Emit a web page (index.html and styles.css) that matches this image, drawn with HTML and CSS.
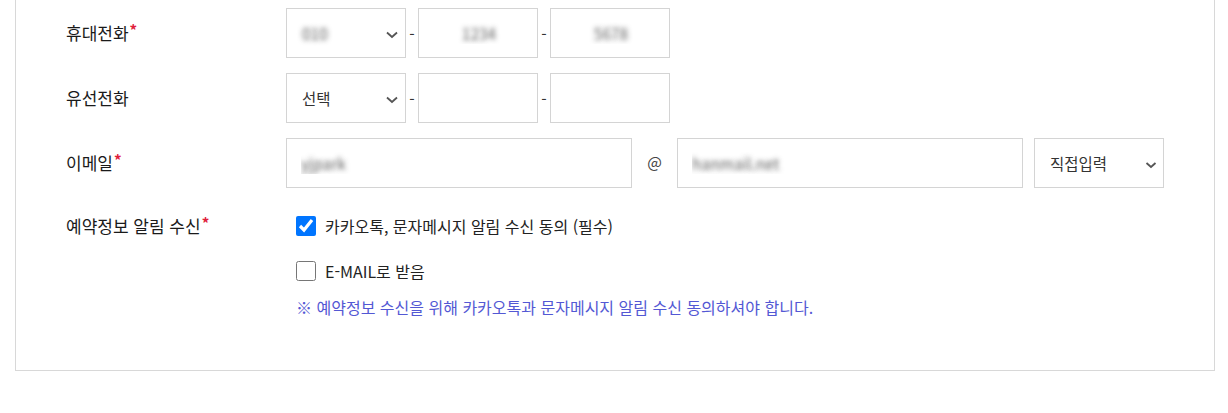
FILE: index.html
```html
<!DOCTYPE html>
<html lang="ko">
<head>
<meta charset="utf-8">
<title>예약정보</title>
<link rel="stylesheet" href="styles.css">
</head>
<body>
<div class="panel">
  <div class="row">
    <div class="label">휴대전화<span class="req">*</span></div>
    <div class="field">
      <div class="select sel-sm"><span class="blur">010</span><svg class="chev" width="12" height="8" viewBox="0 0 12 8"><path d="M1 1.5 L6 6 L11 1.5" fill="none" stroke="#555" stroke-width="1.8"/></svg></div>
      <span class="sep">-</span>
      <input class="box num blur" value="1234" readonly>
      <span class="sep">-</span>
      <input class="box num blur" value="5678" readonly>
    </div>
  </div>
  <div class="row">
    <div class="label">유선전화</div>
    <div class="field">
      <div class="select sel-sm"><span>선택</span><svg class="chev" width="12" height="8" viewBox="0 0 12 8"><path d="M1 1.5 L6 6 L11 1.5" fill="none" stroke="#555" stroke-width="1.8"/></svg></div>
      <span class="sep">-</span>
      <input class="box num" value="" readonly>
      <span class="sep">-</span>
      <input class="box num" value="" readonly>
    </div>
  </div>
  <div class="row">
    <div class="label">이메일<span class="req">*</span></div>
    <div class="field">
      <input class="box mail blur" value="yjpark" readonly>
      <span class="at">@</span>
      <input class="box mail blur" value="hanmail.net" readonly>
      <div class="select sel-md"><span>직접입력</span><svg class="chev" width="12" height="8" viewBox="0 0 12 8"><path d="M1.5 2 L6 6 L10.5 2" fill="none" stroke="#555" stroke-width="1.8"/></svg></div>
    </div>
  </div>
  <div class="row agree">
    <div class="label">예약정보 알림 수신<span class="req">*</span></div>
    <div class="options">
      <label class="check"><input type="checkbox" checked><span>카카오톡, 문자메시지 알림 수신 동의 (필수)</span></label>
      <label class="check"><input type="checkbox"><span>E-MAIL로 받음</span></label>
      <p class="note">※ 예약정보 수신을 위해 카카오톡과 문자메시지 알림 수신 동의하셔야 합니다.</p>
    </div>
  </div>
</div>
</body>
</html>
```
FILE: styles.css
```css
html, body {
  margin: 0;
  padding: 0;
  background: #fff;
}
body {
  font-family: "Noto Sans CJK KR", "Noto Sans", sans-serif;
  font-size: 16px;
  color: #222;
}
.panel {
  box-sizing: border-box;
  width: 1200px;
  margin-left: 15px;
  border: 1px solid #d8d8d8;
  border-top: 0;
  padding: 8px 0 52px 50px;
  display: flex;
  flex-direction: column;
  gap: 15px;
}
.row {
  display: flex;
  align-items: center;
  height: 50px;
}
.label {
  width: 220px;
  flex: none;
  font-size: 17px;
  line-height: 20px;
  color: #1a1a1a;
}
.req {
  color: #e0203a;
  font-size: 15px;
  font-weight: bold;
  vertical-align: top;
  line-height: 14px;
  margin-left: 1px;
}
.field {
  display: flex;
  align-items: center;
  font-size: 15.5px;
}
.box {
  box-sizing: border-box;
  height: 50px;
  border: 1px solid #d4d4d4;
  border-radius: 0;
  background: #fff;
  font: inherit;
  color: #333;
  outline: none;
  margin: 0;
  padding: 0 14px;
}
.num {
  width: 120px;
  text-align: center;
  padding-left: 16px;
}
.mail {
  width: 346px;
}
.select {
  box-sizing: border-box;
  height: 50px;
  border: 1px solid #d4d4d4;
  display: flex;
  align-items: center;
  justify-content: space-between;
  padding: 0 7px 0 15px;
  color: #333;
}
.sel-sm {
  width: 120px;
}
.sel-md {
  width: 130px;
  margin-left: 11px;
  padding-right: 6px;
}
.chev {
  display: block;
  margin-top: 3px;
}
.sep {
  width: 12px;
  text-align: center;
  color: #333;
}
.at {
  width: 45px;
  text-align: center;
  color: #444;
  margin-top: -5px;
}
.blur {
  color: transparent;
  text-shadow: 0 0 5px rgba(80, 80, 80, 0.9);
}
.agree {
  height: auto;
  align-items: flex-start;
  padding-top: 13px;
}
.options {
  display: flex;
  flex-direction: column;
  padding-left: 10px;
}
.check {
  display: flex;
  align-items: center;
  gap: 9px;
  height: 20px;
  line-height: 20px;
  color: #222;
  margin-bottom: 25px;
}
.check:nth-child(2) {
  margin-bottom: 15px;
}
.check input {
  width: 20px;
  height: 20px;
  margin: 0;
}
.note {
  margin: 0;
  line-height: 22px;
  color: #5358d4;
}
```
